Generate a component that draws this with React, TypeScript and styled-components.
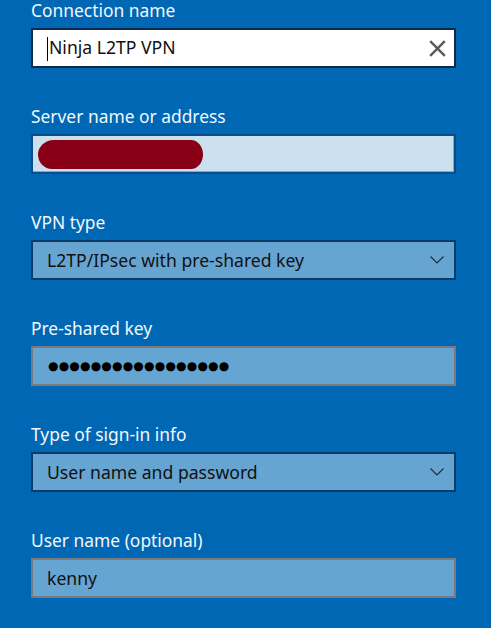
import React from 'react';
import styled, { createGlobalStyle, css } from 'styled-components';

const GlobalStyle = createGlobalStyle`
  html, body {
    margin: 0;
    padding: 0;
    background: #0067b4;
  }
  body {
    font-family: "Segoe UI", "Noto Sans", "Open Sans", sans-serif;
    overflow: hidden;
  }
`;

const Page = styled.div`
  width: 491px;
  height: 628px;
  background: #0067b4;
  padding-left: 31px;
  box-sizing: border-box;
  display: flex;
  flex-direction: column;
  gap: 38px;
`;

const Field = styled.div`
  display: flex;
  flex-direction: column;
  gap: 8px;
  width: 425px;
`;

const Label = styled.div`
  font-size: 17.4px;
  line-height: 20px;
  color: #f2f7fb;
`;

type Variant = 'focused' | 'disabled' | 'select' | 'input';

const variants = {
  focused: css`
    background: #ffffff;
    border-color: #0e2a48;
  `,
  disabled: css`
    background: #cce1ef;
    border-color: #0a4d88;
    box-shadow: inset -1px -1px 0 #8ea6b8;
  `,
  select: css`
    background: #66a5d2;
    border-color: #0b3c69;
  `,
  input: css`
    background: #66a5d2;
    border-color: #7a7a7a;
  `,
};

const Box = styled.div<{ $variant: Variant }>`
  height: 40px;
  box-sizing: border-box;
  border: 2px solid;
  display: flex;
  align-items: center;
  padding: 0 7px 0 14px;
  font-size: 17.6px;
  color: #111;
  ${(p) => variants[p.$variant]}
`;

const Value = styled.span`
  flex: 1;
  white-space: nowrap;
`;

const Caret = styled.span`
  display: inline-block;
  width: 1px;
  height: 24px;
  background: #000;
  margin-right: 1px;
  vertical-align: middle;
`;

const Redacted = styled.span`
  display: block;
  width: 165px;
  height: 29px;
  margin-left: -9px;
  background: #870016;
  border-radius: 16px 12px 12px 14px / 50%;
`;

const Dots = styled.span`
  flex: 1;
  padding-left: 1px;
  font-family: "DejaVu Sans", sans-serif;
  font-size: 12px;
  letter-spacing: 0.2px;
  color: #000;
`;

const IconSlot = styled.span`
  display: flex;
  align-items: center;
  justify-content: center;
  width: 20px;
  height: 20px;
`;

const ClearIcon = () => (
  <IconSlot>
    <svg width="17" height="17" viewBox="0 0 17 17">
      <path d="M1.2 1.2 L15.8 15.8 M15.8 1.2 L1.2 15.8" stroke="#595959" strokeWidth="2.4" fill="none" />
    </svg>
  </IconSlot>
);

const Chevron = () => (
  <IconSlot>
    <svg width="14" height="8" viewBox="0 0 14 8">
      <path d="M0.5 0.5 L7 7 L13.5 0.5" stroke="#1c2c3c" strokeWidth="1.1" fill="none" />
    </svg>
  </IconSlot>
);

const App: React.FC = () => {
  return (
    <>
      <GlobalStyle />
      <Page>
        <Field>
          <Label>Connection name</Label>
          <Box $variant="focused">
            <Value>
              <Caret />
              Ninja L2TP VPN
            </Value>
            <ClearIcon />
          </Box>
        </Field>

        <Field>
          <Label>Server name or address</Label>
          <Box $variant="disabled">
            <Redacted />
          </Box>
        </Field>

        <Field>
          <Label>VPN type</Label>
          <Box $variant="select">
            <Value>L2TP/IPsec with pre-shared key</Value>
            <Chevron />
          </Box>
        </Field>

        <Field>
          <Label>Pre-shared key</Label>
          <Box $variant="input">
            <Dots>{'●'.repeat(17)}</Dots>
          </Box>
        </Field>

        <Field>
          <Label>Type of sign-in info</Label>
          <Box $variant="select">
            <Value>User name and password</Value>
            <Chevron />
          </Box>
        </Field>

        <Field>
          <Label>User name (optional)</Label>
          <Box $variant="input">
            <Value>kenny</Value>
          </Box>
        </Field>
      </Page>
    </>
  );
};

export default App;
